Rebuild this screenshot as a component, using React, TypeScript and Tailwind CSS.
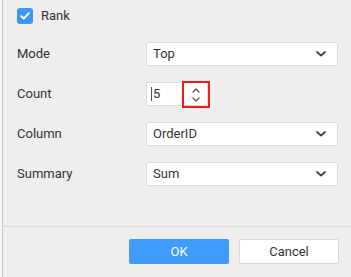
import React from "react";

function Chevron() {
  return (
    <svg width="10" height="6" viewBox="0 0 10 6" className="mr-[11px]">
      <path d="M1 1 L5 4.5 L9 1" fill="none" stroke="#444" strokeWidth="1.8" strokeLinecap="round" strokeLinejoin="round" />
    </svg>
  );
}

function Select({ value }: { value: string }) {
  return (
    <div className="w-[192px] h-[24px] bg-white border border-[#dcdcdc] rounded-[2px] flex items-center justify-between pl-[6px] text-[13px] text-[#333]">
      <span>{value}</span>
      <Chevron />
    </div>
  );
}

function Row({ label, children }: { label: string; children: React.ReactNode }) {
  return (
    <div className="flex items-center h-[24px]">
      <div className="w-[129px] text-[13px] text-[#333]">{label}</div>
      {children}
    </div>
  );
}

export default function App() {
  return (
    <div className="w-[351px] h-[277px] bg-[#eeeeee] flex font-['Roboto',sans-serif]">
      <div className="w-[2px] bg-[#f7f7f7]" />
      <div className="w-px bg-[#c6c6c6]" />
      <div className="flex-1 flex flex-col">
        <div className="h-[226px] pl-[14px] pt-[8px] flex flex-col">
          <div className="flex items-center h-4">
            <div className="w-4 h-4 rounded-[3px] bg-[#3b98f8] flex items-center justify-center">
              <svg width="10" height="8" viewBox="0 0 10 8">
                <path d="M1.2 4.2 L3.8 6.6 L8.8 1.2" fill="none" stroke="white" strokeWidth="1.8" strokeLinecap="round" strokeLinejoin="round" />
              </svg>
            </div>
            <span className="ml-2 text-[13px] text-[#333]">Rank</span>
          </div>
          <div className="flex flex-col gap-4 mt-[18px]">
            <Row label="Mode">
              <Select value="Top" />
            </Row>
            <Row label="Count">
              <div className="relative w-[62px] h-[24px] bg-white border border-[#dcdcdc] rounded-[2px] flex items-center text-[13px] text-[#333]">
                <div className="ml-[4px] w-px h-[14px] bg-[#555]" />
                <span className="ml-[1px]">5</span>
                <div className="absolute left-[35px] top-[-2px] w-[28px] h-[27px] border-2 border-[#ee1c1c] flex flex-col items-center justify-center gap-[4px]">
                  <svg width="8" height="5" viewBox="0 0 8 5">
                    <path d="M1 4 L4 1 L7 4" fill="none" stroke="#555" strokeWidth="1.3" strokeLinecap="round" strokeLinejoin="round" />
                  </svg>
                  <svg width="8" height="5" viewBox="0 0 8 5">
                    <path d="M1 1 L4 4 L7 1" fill="none" stroke="#555" strokeWidth="1.3" strokeLinecap="round" strokeLinejoin="round" />
                  </svg>
                </div>
              </div>
            </Row>
            <Row label="Column">
              <Select value="OrderID" />
            </Row>
            <Row label="Summary">
              <Select value="Sum" />
            </Row>
          </div>
        </div>
        <div className="h-px bg-[#dadada]" />
        <div className="flex justify-end gap-[10px] pr-[12px] pt-[12px]">
          <button className="w-[100px] h-[25px] rounded-[2px] bg-[#3f9cfb] text-white text-[13px]">OK</button>
          <button className="w-[100px] h-[25px] rounded-[2px] bg-white border border-[#d8d8d8] text-[#333] text-[13px]">Cancel</button>
        </div>
      </div>
    </div>
  );
}
